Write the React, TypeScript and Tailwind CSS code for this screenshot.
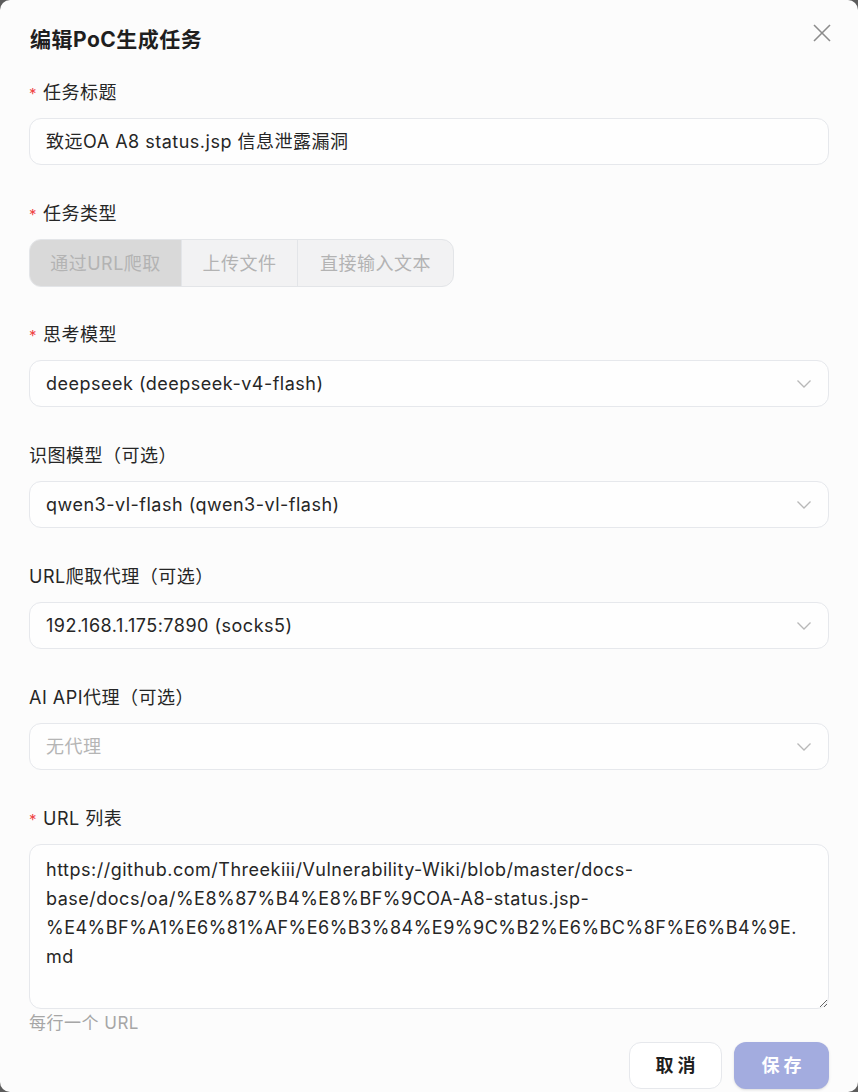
const font = { fontFamily: "Inter, 'Noto Sans CJK SC', sans-serif", letterSpacing: "0.5px" };

function Label({ text, required }: { text: string; required?: boolean }) {
  return (
    <div className="flex items-center h-6 mb-[14px] text-[18px] text-[#262626]">
      {required && <span className="text-[#ef4444] mr-[6px] text-[15px] leading-none mt-[2px]">*</span>}
      <span>{text}</span>
    </div>
  );
}

function Chevron() {
  return (
    <svg width="16" height="10" viewBox="0 0 16 10" fill="none" className="text-[#b8b8b8]">
      <polyline points="1.5,1.5 8,8 14.5,1.5" stroke="currentColor" strokeWidth="1.3" />
    </svg>
  );
}

function Select({ value, placeholder }: { value?: string; placeholder?: string }) {
  return (
    <div className="h-[47px] rounded-[12px] border border-[#e6e8ec] bg-white/70 flex items-center justify-between pl-4 pr-[16px] text-[18px]">
      <span className={value ? "text-[#262626]" : "text-[#b5b5b5]"}>{value ?? placeholder}</span>
      <Chevron />
    </div>
  );
}

export default function App() {
  return (
    <div className="w-[858px] h-[1092px] bg-[#5c5c5c] overflow-hidden" style={font}>
      <div className="w-full h-full bg-[#fcfcfc] rounded-[10px] px-[29px] pt-[26px] flex flex-col">
        {/* header */}
        <div className="flex items-center justify-between h-7 mb-[26px]">
          <h1 className="text-[21px] font-bold text-[#1f1f1f] pl-[1px]">编辑PoC生成任务</h1>
          <svg width="18" height="18" viewBox="0 0 18 18" className="text-[#8c8c8c] -mt-[14px] mr-[-2px]">
            <line x1="1" y1="1" x2="17" y2="17" stroke="currentColor" strokeWidth="1.6" />
            <line x1="17" y1="1" x2="1" y2="17" stroke="currentColor" strokeWidth="1.6" />
          </svg>
        </div>

        <Label text="任务标题" required />
        <div className="h-[47px] rounded-[12px] border border-[#e6e8ec] bg-white/70 flex items-center px-4 text-[18px] text-[#262626]">
          致远OA A8 status.jsp 信息泄露漏洞
        </div>

        <div className="mt-9">
          <Label text="任务类型" required />
          <div className="flex w-[425px] h-[48px] rounded-[12px] border border-[#e3e5e8] bg-[#f2f2f3] overflow-hidden text-[18px] text-[#b3b3b3]">
            <div className="w-[152px] flex items-center justify-center bg-[#d9d9d9] border-r border-[#e3e5e8]">通过URL爬取</div>
            <div className="w-[116px] flex items-center justify-center border-r border-[#e3e5e8]">上传文件</div>
            <div className="flex-1 flex items-center justify-center">直接输入文本</div>
          </div>
        </div>

        <div className="mt-[35px]">
          <Label text="思考模型" required />
          <Select value="deepseek (deepseek-v4-flash)" />
        </div>

        <div className="mt-9">
          <Label text="识图模型（可选）" />
          <Select value="qwen3-vl-flash (qwen3-vl-flash)" />
        </div>

        <div className="mt-9">
          <Label text="URL爬取代理（可选）" />
          <Select value="192.168.1.175:7890 (socks5)" />
        </div>

        <div className="mt-9">
          <Label text="AI API代理（可选）" />
          <Select placeholder="无代理" />
        </div>

        <div className="mt-9">
          <Label text="URL 列表" required />
          <textarea
            readOnly
            className="w-full h-[165px] rounded-[12px] border border-[#e6e8ec] bg-white/70 px-4 py-[10px] text-[18px] leading-[29px] text-[#262626] outline-none resize-y"
            style={font}
            value="https://github.com/Threekiii/Vulnerability-Wiki/blob/master/docs-base/docs/oa/%E8%87%B4%E8%BF%9COA-A8-status.jsp-%E4%BF%A1%E6%81%AF%E6%B3%84%E9%9C%B2%E6%BC%8F%E6%B4%9E.md"
          />
          <div className="text-[17px] text-[#a6a6a6] -mt-[3px] h-6 flex items-center">每行一个 URL</div>
        </div>

        <div className="flex justify-end gap-3 mt-[6px]">
          <button className="w-[93px] h-[47px] rounded-[12px] border border-[#e6e8ec] bg-white text-[18px] font-bold text-[#1f1f1f] tracking-[4px] pl-1">
            取消
          </button>
          <button className="w-[95px] h-[47px] rounded-[12px] bg-[#a3acdf] text-[18px] font-bold text-white tracking-[4px] pl-1 shadow-sm">
            保存
          </button>
        </div>
      </div>
    </div>
  );
}
